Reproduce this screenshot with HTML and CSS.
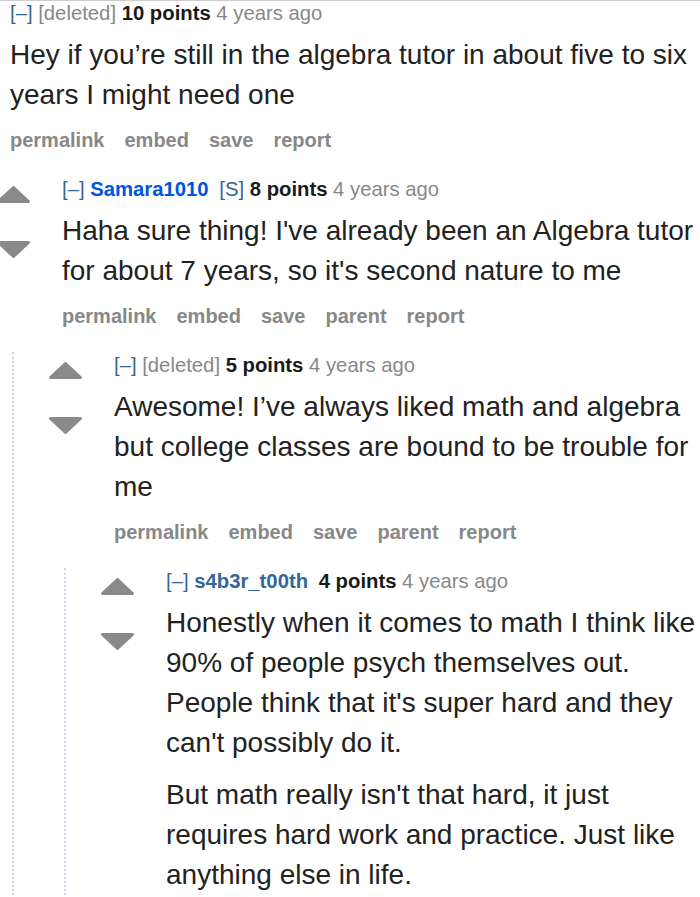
FILE: index.html
```html
<!DOCTYPE html>
<html lang="en">
<head>
<meta charset="utf-8">
<title>Comments</title>
<link rel="stylesheet" href="styles.css">
</head>
<body>
<div class="page">
  <div class="thread">
    <div class="comment">
      <div class="midcol">
        <svg class="arrow" viewBox="0 0 33 17"><polygon points="16.5,1.5 31.5,15.5 1.5,15.5"/></svg>
        <svg class="arrow" viewBox="0 0 33 17"><polygon points="1.5,1.5 31.5,1.5 16.5,15.5"/></svg>
      </div>
      <div class="entry">
        <p class="tagline"><span class="expand">[–]</span> <span class="deleted">[deleted]</span> <span class="score">10 points</span> <time>4 years ago</time></p>
        <div class="md"><p>Hey if you’re still in the algebra tutor in about five to six years I might need one</p></div>
        <ul class="buttons"><li>permalink</li><li>embed</li><li>save</li><li>report</li></ul>

        <div class="child">
          <div class="comment">
            <div class="midcol">
              <svg class="arrow" viewBox="0 0 33 17"><polygon points="16.5,1.5 31.5,15.5 1.5,15.5"/></svg>
              <svg class="arrow" viewBox="0 0 33 17"><polygon points="1.5,1.5 31.5,1.5 16.5,15.5"/></svg>
            </div>
            <div class="entry">
              <p class="tagline"><span class="expand">[–]</span> <span class="author submitter">Samara1010</span> <span class="userattrs">[S]</span> <span class="score">8 points</span> <time>4 years ago</time></p>
              <div class="md"><p>Haha sure thing! I've already been an Algebra tutor for about 7 years, so it's second nature to me</p></div>
              <ul class="buttons"><li>permalink</li><li>embed</li><li>save</li><li>parent</li><li>report</li></ul>

              <div class="child">
                <div class="comment">
                  <div class="midcol">
                    <svg class="arrow" viewBox="0 0 33 17"><polygon points="16.5,1.5 31.5,15.5 1.5,15.5"/></svg>
                    <svg class="arrow" viewBox="0 0 33 17"><polygon points="1.5,1.5 31.5,1.5 16.5,15.5"/></svg>
                  </div>
                  <div class="entry">
                    <p class="tagline"><span class="expand">[–]</span> <span class="deleted">[deleted]</span> <span class="score">5 points</span> <time>4 years ago</time></p>
                    <div class="md"><p>Awesome! I’ve always liked math and algebra but college classes are bound to be trouble for me</p></div>
                    <ul class="buttons"><li>permalink</li><li>embed</li><li>save</li><li>parent</li><li>report</li></ul>

                    <div class="child">
                      <div class="comment">
                        <div class="midcol">
                          <svg class="arrow" viewBox="0 0 33 17"><polygon points="16.5,1.5 31.5,15.5 1.5,15.5"/></svg>
                          <svg class="arrow" viewBox="0 0 33 17"><polygon points="1.5,1.5 31.5,1.5 16.5,15.5"/></svg>
                        </div>
                        <div class="entry">
                          <p class="tagline"><span class="expand">[–]</span> <span class="author">s4b3r_t00th</span> <span class="userattrs"></span> <span class="score">4 points</span> <time>4 years ago</time></p>
                          <div class="md">
                            <p>Honestly when it comes to math I think like 90% of people psych themselves out.<br>People think that it's super hard and they can't possibly do it.</p>
                            <p>But math really isn't that hard, it just requires hard work and practice. Just like anything else in life.</p>
                          </div>
                        </div>
                      </div>
                    </div>
                  </div>
                </div>
              </div>
            </div>
          </div>
        </div>
      </div>
    </div>
  </div>
</div>
</body>
</html>
```

FILE: styles.css
```css
html, body {
  margin: 0;
  padding: 0;
  background: #ffffff;
  overflow: hidden;
}

.page {
  border-top: 1px solid #cdcdcd;
  font-family: "Liberation Sans", Arial, Helvetica, sans-serif;
  color: #222222;
}

.thread {
  margin-left: -90px;
}

.comment {
  display: grid;
  grid-template-columns: 100px minmax(0, 1fr);
  padding-top: 1px;
}

.thread > .comment {
  padding-top: 0;
}

.midcol {
  display: flex;
  flex-direction: column;
  align-items: flex-start;
  gap: 38px;
  padding: 9px 0 0 35px;
}

.arrow {
  display: block;
  width: 33px;
  height: 17px;
  fill: #8a8a8a;
  stroke: #8a8a8a;
  stroke-width: 3;
  stroke-linejoin: round;
}

.entry {
  min-width: 0;
}

.tagline {
  margin: 0;
  font-size: 20.3px;
  line-height: 24px;
  color: #888888;
  white-space: nowrap;
}

.expand {
  color: #336699;
}

.deleted {
  color: #888888;
}

.author {
  font-weight: bold;
  color: #336699;
}

.author.submitter {
  color: #0055df;
}

.userattrs {
  margin-left: 5px;
  color: #336699;
}

.score {
  font-weight: bold;
  color: #1a1a1a;
}

.md {
  margin-top: 10px;
  font-size: 28px;
  line-height: 40px;
  color: #222222;
}

.md p {
  margin: 0;
}

.md p + p {
  margin-top: 12px;
}

.buttons {
  list-style: none;
  display: flex;
  gap: 20px;
  margin: 13px 0 24px;
  padding: 0;
  font-size: 20px;
  line-height: 24px;
  font-weight: bold;
  color: #888888;
}

.child {
  margin-left: -50px;
  border-left: 2px dotted #cfcff7;
}
```
